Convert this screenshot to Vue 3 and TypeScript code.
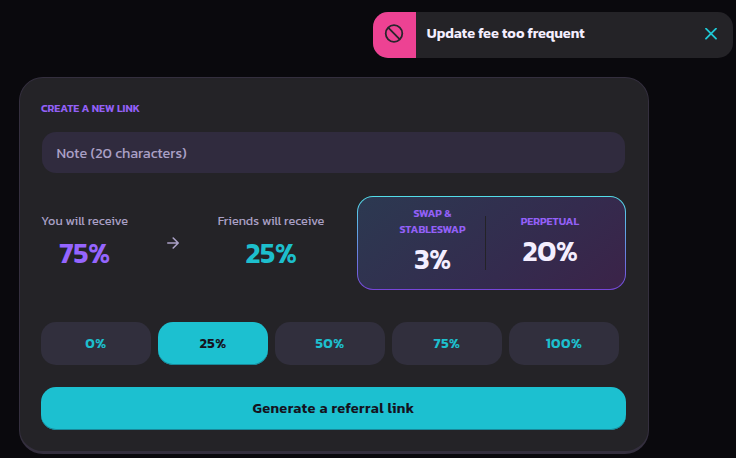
<script setup lang="ts">
import { ref } from 'vue'

const shares: number[] = [0, 25, 50, 75, 100]
const friendShare = ref<number>(25)
const note = ref<string>('')
const toastOpen = ref<boolean>(true)
</script>

<template>
  <main class="page">
    <section class="card">
      <h2 class="title">Create a new link</h2>
      <input v-model="note" class="note" maxlength="20" placeholder="Note (20 characters)" />

      <div class="summary">
        <div class="receive you">
          <span class="label">You will receive</span>
          <span class="share violet">{{ 100 - friendShare }}%</span>
        </div>
        <svg class="arrow" viewBox="0 0 12 12" fill="none" stroke="currentColor" stroke-width="1.6" stroke-linecap="round" stroke-linejoin="round">
          <path d="M0.8 6H11.2M6.2 1L11.2 6L6.2 11" />
        </svg>
        <div class="receive friends">
          <span class="label">Friends will receive</span>
          <span class="share teal">{{ friendShare }}%</span>
        </div>
        <div class="rates">
          <div class="rates-inner">
            <div class="rate swap">
              <span class="rate-name">Swap &amp;<br />Stableswap</span>
              <span class="rate-value">3%</span>
            </div>
            <div class="divider"></div>
            <div class="rate perp">
              <span class="rate-name">Perpetual</span>
              <span class="rate-value">20%</span>
            </div>
          </div>
        </div>
      </div>

      <div class="options">
        <button
          v-for="share in shares"
          :key="share"
          class="option"
          :class="{ active: share === friendShare }"
          @click="friendShare = share"
        >{{ share }}%</button>
      </div>
      <button class="generate">Generate a referral link</button>
    </section>

    <aside v-if="toastOpen" class="toast">
      <div class="toast-icon">
        <svg viewBox="0 0 20 20" width="20" height="20" fill="none" stroke="#27262c" stroke-width="1.8">
          <circle cx="10" cy="10.5" r="8.3" />
          <path d="M4.2 4.7L15.8 16.3" />
        </svg>
      </div>
      <span class="toast-text">Update fee too frequent</span>
      <button class="close" aria-label="Close" @click="toastOpen = false">
        <svg viewBox="0 0 12 12" width="12" height="12" fill="none" stroke="#1fc7d4" stroke-width="1.8" stroke-linecap="round">
          <path d="M1 0.7L11 10.7M11 0.7L1 10.7" />
        </svg>
      </button>
    </aside>
  </main>
</template>

<style>
body {
  background: #0a090d;
  overflow: hidden;
}
</style>

<style scoped>
* {
  box-sizing: border-box;
}
.page {
  position: relative;
  height: 458px;
  padding: 77px 0 0 19px;
  background: #0a090d;
  font-family: Kanit, "Noto Sans", sans-serif;
}
button,
input {
  font-family: inherit;
  border: 0;
  margin: 0;
}
button {
  cursor: pointer;
}
.card {
  width: 630px;
  height: 377px;
  padding: 22px 22px 0 21px;
  border: solid #342f3e;
  border-width: 1px 1px 3px;
  border-radius: 24px;
  background: #242327;
}
.title {
  height: 16px;
  margin: 0 0 16px;
  font-size: 10.8px;
  line-height: 17px;
  font-weight: 600;
  text-transform: uppercase;
  white-space: nowrap;
  color: #9360f7;
}
.note {
  display: block;
  width: 583px;
  height: 41px;
  margin-left: 1px;
  padding: 0 14.4px;
  border-radius: 14px;
  background: #302b3e;
  color: #f4eeff;
  font-size: 14.4px;
  outline: none;
}
.note::placeholder {
  color: #aaa0c6;
  opacity: 1;
}
.summary {
  display: flex;
  align-items: center;
  height: 94px;
  margin-top: 23px;
}
.receive {
  display: flex;
  flex-direction: column;
  align-items: center;
  height: 94px;
  padding-top: 15px;
}
.you {
  width: 87px;
}
.friends {
  width: 106px;
}
.label {
  font-size: 12.6px;
  line-height: 20px;
  white-space: nowrap;
  color: #aaa0c6;
}
.share {
  margin-top: 6px;
  font-size: 28.8px;
  line-height: 32px;
  font-weight: 600;
  letter-spacing: -0.01em;
}
.violet {
  color: #9565ff;
}
.teal {
  color: #1dbfcd;
}
.arrow {
  width: 12px;
  height: 12px;
  margin: 0 39px;
  color: #aaa0c6;
}
.rates {
  width: 269px;
  height: 94px;
  margin-left: 33px;
  padding: 1px;
  border-radius: 16px;
  background: linear-gradient(#53dee9, #7645d9);
}
.rates-inner {
  display: flex;
  align-items: center;
  height: 100%;
  border-radius: 15px;
  background: linear-gradient(140deg, #2c3951, #342b4e 62%, #3b2348);
}
.rate {
  display: flex;
  flex-direction: column;
  align-items: center;
  width: 107px;
  padding-bottom: 6px;
  text-align: center;
}
.swap {
  width: 106px;
  margin-left: 21.5px;
}
.perp {
  margin-left: 10.5px;
}
.divider {
  width: 1px;
  height: 54px;
  margin-left: -0.5px;
  background: #242327;
}
.rate-name {
  font-size: 10.8px;
  line-height: 16px;
  font-weight: 600;
  text-transform: uppercase;
  color: #9360f7;
}
.rate-value {
  margin-top: 6px;
  font-size: 28.8px;
  line-height: 32px;
  font-weight: 600;
  letter-spacing: -0.01em;
  color: #f4eeff;
}
.options {
  display: flex;
  gap: 7px;
  margin-top: 32px;
}
.option {
  width: 110px;
  height: 43px;
  padding: 0 0 2px;
  border-radius: 15px;
  background: #312f3d;
  color: #1dbfcd;
  font-size: 14.4px;
  font-weight: 600;
  letter-spacing: 0.03em;
}
.option.active,
.generate {
  background: #1cc0d0;
  color: #15131e;
  box-shadow: inset 0 -1px #18899a;
}
.generate {
  display: block;
  width: 585px;
  height: 43px;
  margin-top: 22px;
  padding: 0 0 2px;
  border-radius: 15px;
  font-size: 14.4px;
  font-weight: 600;
  letter-spacing: 0.03em;
}
.toast {
  position: absolute;
  top: 12px;
  left: 373px;
  display: flex;
  align-items: center;
  width: 360px;
  height: 46px;
  overflow: hidden;
  border-radius: 15px;
  background: #242327;
}
.toast-icon {
  display: flex;
  justify-content: center;
  width: 43px;
  height: 46px;
  padding: 11px 1px 0 0;
  background: #ed4293;
}
.toast-text {
  flex: 1;
  padding: 0 0 4px 10.8px;
  font-size: 14.4px;
  font-weight: 600;
  white-space: nowrap;
  color: #f4eeff;
}
.close {
  display: flex;
  padding: 0;
  margin: 0 16px 3px 0;
  background: none;
}
</style>
